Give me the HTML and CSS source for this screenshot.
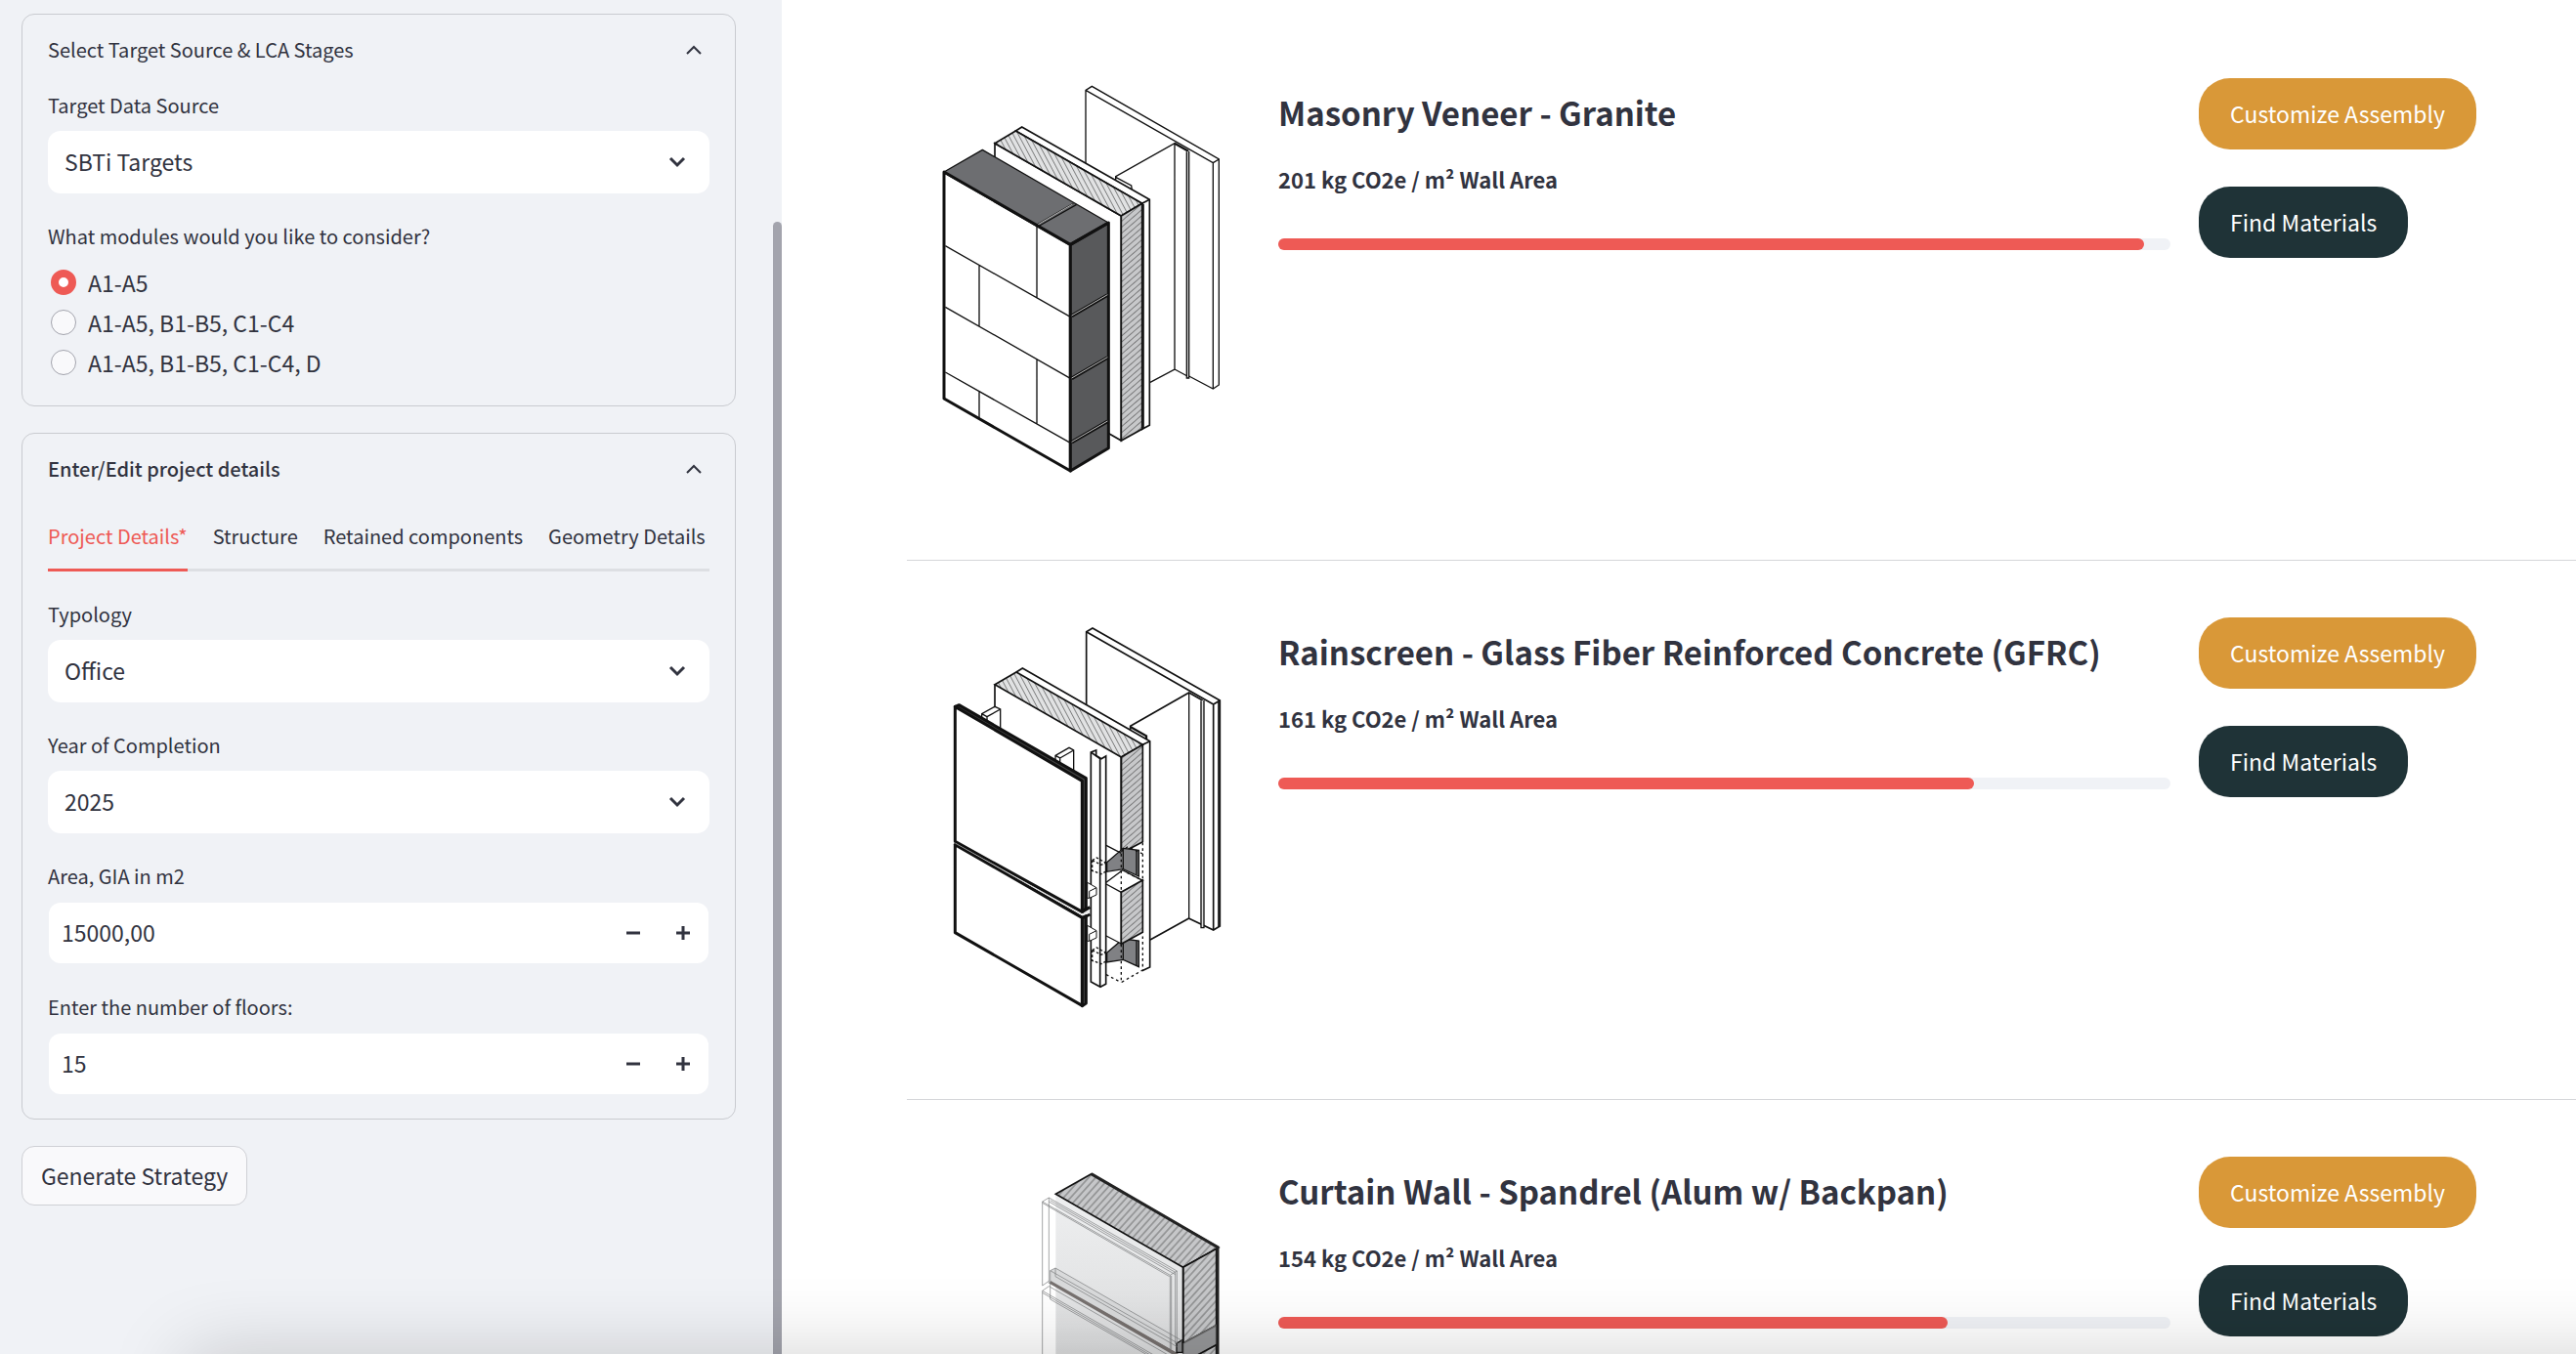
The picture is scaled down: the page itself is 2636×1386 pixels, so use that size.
FILE: index.html
```html
<!DOCTYPE html>
<html lang="en">
<head>
<meta charset="utf-8">
<title>Facade Assemblies</title>
<link rel="stylesheet" href="styles.css">
</head>
<body>
<div class="app">
  <aside class="sidebar">
    <details class="expander" open>
      <summary class="expander-head">
        <span>Select Target Source &amp; LCA Stages</span>
        <svg class="chevron" viewBox="0 0 20 20" aria-hidden="true"><path d="M3 14l7-7 7 7"/></svg>
      </summary>
      <div class="expander-body">
        <div class="field">
          <label class="label" for="source">Target Data Source</label>
          <div class="select">
            <select id="source"><option>SBTi Targets</option></select>
            <svg class="chevron bold" viewBox="0 0 20 20" aria-hidden="true"><path d="M3 6l7 7 7-7"/></svg>
          </div>
        </div>
        <fieldset class="field radios">
          <legend class="label">What modules would you like to consider?</legend>
          <label class="radio"><input type="radio" name="modules" checked>A1-A5</label>
          <label class="radio"><input type="radio" name="modules">A1-A5, B1-B5, C1-C4</label>
          <label class="radio"><input type="radio" name="modules">A1-A5, B1-B5, C1-C4, D</label>
        </fieldset>
      </div>
    </details>

    <details class="expander" open>
      <summary class="expander-head strong">
        <span>Enter/Edit project details</span>
        <svg class="chevron" viewBox="0 0 20 20" aria-hidden="true"><path d="M3 14l7-7 7 7"/></svg>
      </summary>
      <div class="expander-body">
        <div class="tabs" role="tablist">
          <button class="tab active" role="tab" aria-selected="true">Project Details*</button>
          <button class="tab" role="tab" aria-selected="false">Structure</button>
          <button class="tab" role="tab" aria-selected="false">Retained components</button>
          <button class="tab" role="tab" aria-selected="false">Geometry Details</button>
        </div>
        <div class="field">
          <label class="label" for="typology">Typology</label>
          <div class="select">
            <select id="typology"><option>Office</option></select>
            <svg class="chevron bold" viewBox="0 0 20 20" aria-hidden="true"><path d="M3 6l7 7 7-7"/></svg>
          </div>
        </div>
        <div class="field">
          <label class="label" for="year">Year of Completion</label>
          <div class="select">
            <select id="year"><option>2025</option></select>
            <svg class="chevron bold" viewBox="0 0 20 20" aria-hidden="true"><path d="M3 6l7 7 7-7"/></svg>
          </div>
        </div>
        <div class="field">
          <label class="label" for="area">Area, GIA in m2</label>
          <div class="number">
            <input id="area" type="text" inputmode="decimal" value="15000,00">
            <button class="step" aria-label="Decrease area"><svg viewBox="0 0 14 14"><path d="M0 7h14"/></svg></button>
            <button class="step" aria-label="Increase area"><svg viewBox="0 0 14 14"><path d="M0 7h14M7 0v14"/></svg></button>
          </div>
        </div>
        <div class="field">
          <label class="label" for="floors">Enter the number of floors:</label>
          <div class="number">
            <input id="floors" type="text" inputmode="numeric" value="15">
            <button class="step" aria-label="Decrease floors"><svg viewBox="0 0 14 14"><path d="M0 7h14"/></svg></button>
            <button class="step" aria-label="Increase floors"><svg viewBox="0 0 14 14"><path d="M0 7h14M7 0v14"/></svg></button>
          </div>
        </div>
      </div>
    </details>

    <button class="generate">Generate Strategy</button>
    <div class="scroll-thumb"></div>
  </aside>

  <main class="main">
    <article class="assembly">
      <svg class="drawing" viewBox="0 0 990 1290" role="img" aria-label="Masonry veneer assembly">
        <defs>
          <pattern id="hatch-top" width="14" height="14" patternUnits="userSpaceOnUse" patternTransform="rotate(-28)">
            <rect width="14" height="14" fill="#e1e2e3"/><path d="M7 0v14" stroke="#555" stroke-width="2"/>
          </pattern>
          <pattern id="hatch-side" width="14" height="14" patternUnits="userSpaceOnUse" patternTransform="rotate(49)">
            <rect width="14" height="14" fill="#c7c8ca"/><path d="M7 0v14" stroke="#555" stroke-width="2"/>
          </pattern>
        </defs>
        <g class="line">
          <path d="M513 292V67l19-12 390 224v693l-18 12-74-39M513 67l391 223v694M904 290l18-11"/>
          <path d="M605 342v-10l181-102v694l-75 40M786 924l39 21M605 334l48 26 2 14"/>
          <path class="heavy" d="M786 230l42 24"/>
          <path d="M823 256v695h7V254" fill="#d8d8d8"/>
        </g>
        <g class="line mid">
          <path class="paper" d="M234 230l388 223v690l-388-223z"/>
          <path class="paper" d="M298 192l19-12 392 223v693l-23 12V415z"/>
          <path d="M234 230l64-38 388 223-64 38z" fill="url(#hatch-top)"/>
          <path d="M622 453l64-38v693l-64 35z" fill="url(#hatch-side)"/>
          <path d="M686 415l23-12M690 417v690"/>
        </g>
        <g class="line thick">
          <path class="paper" d="M78 318l388 223v695L78 1014z"/>
          <path d="M78 318l118-68 387 224-117 67z" fill="#6d6e71" stroke-width="4"/>
          <path d="M466 541l117-67v692l-117 70z" fill="#58595b"/>
          <path d="M78 318l388 223 117-67"/>
        </g>
        <g class="line">
          <path d="M82 545l384 218M82 733l384 219M82 933l384 217M363 480v226M186 605v188M363 895v198M186 993v80"/>
          <path d="M363 480l112-65M371 483l114-65" />
        </g>
        <path d="M470 760l110-64M470 952l110-64M470 1148l110-64" stroke="#111" stroke-width="11"/>
        <path d="M470 759l110-64M470 951l110-64M470 1147l110-64M367 479l106-62" stroke="#bbb" stroke-width="3"/>
      </svg>
      <div class="info">
        <h3 class="title">Masonry Veneer - Granite</h3>
        <p class="score">201 kg CO2e / m² Wall Area</p>
        <div class="bar"><div class="fill" style="width:97%"></div></div>
      </div>
      <div class="actions">
        <button class="pill amber">Customize Assembly</button>
        <button class="pill dark">Find Materials</button>
      </div>
    </article>

    <article class="assembly">
      <svg class="drawing" viewBox="0 6 990 1290" role="img" aria-label="Rainscreen assembly">
        <g class="line mid">
          <path d="M515 303V80l19-11 391 222v693l-20 12-76-36"/>
          <path d="M515 80l390 223v693M905 303l20-12M921 293v693" />
          <path d="M650 382v-12l180-103 42 24M830 960l-119 66" />
        </g>
        <g class="line">
          <path d="M830 267v693M867 292v697h9V290" fill="#ddd"/>
          <path class="heavy" d="M650 372l49 28v14"/>
        </g>
        <g class="line mid">
          <path class="paper" d="M234 242l388 223v690" stroke="none"/>
          <path class="paper" d="M300 204l19-12 391 224v694l-24 11" />
          <path d="M234 242l66-38 388 223-66 38z" fill="url(#hatch-top)"/>
          <path d="M622 465l66-38v298l-66 35z" fill="url(#hatch-side)"/>
          <path d="M622 465v295M234 242v130M688 427l22-11"/>
        </g>
        <g class="line">
          <path class="paper" d="M194 348v-16l40-22 17 8v62M194 332l16 9v20M210 341l41-23"/>
          <path class="paper" d="M420 480v-20l42-24 14 8v70M420 460l14 8v22M434 468l42-24"/>
          <path d="M578 788l50-43 48 6v80l-48-22-50 8z" fill="#808184"/>
          <path d="M578 1066l50-43 48 6v80l-48-22-50 8z" fill="#808184"/>
          <path d="M628 745v64M628 1023v64M669 752v74M669 1030v74"/>
          <path class="paper" d="M576 850l50-38 62 32-66 36v158l-46-24"/>
          <path d="M576 736l46 24M576 855l46 25"/>
        </g>
        <g class="line mid">
          <path d="M622 880l66-37v160l-66 36z" fill="url(#hatch-side)"/>
        </g>
        <path class="line" stroke-dasharray="8 9" d="M622 762v110M688 728v112M622 1040v117l66-38v-112M576 1133l46 24M640 820l48 24M622 755l20-15 46 22"/>
        <g class="line mid">
          <path class="paper" d="M529 450l16-6v16l16 10 14-8v700l-17 9-29-16z"/>
          <path d="M529 450l28 20v700"/>
          <path class="paper" stroke-width="3" d="M518 850l28 16v22l-22 10h-6zM524 877l22-11M524 877v20M518 982l28 16v22l-22 10h-6zM524 1009l22-11M524 1009v20"/>
        </g>
        <path class="line" stroke-dasharray="8 6" d="M533 782l14-8 28 16M533 782v32l28 10 14-8M533 782l28 14 14-6M533 1058l14-8 28 16M533 1058v32l28 10 14-8M533 1058l28 14 14-6"/>
        <g class="line thick">
          <path d="M112 310l12-5 390 225v400l-12 10z" fill="#444"/>
          <path class="paper" d="M112 310l390 228v402L112 724z"/>
          <path d="M112 734l390 224 12-5v268l-12 8z" fill="#444"/>
          <path class="paper" d="M112 734l390 224v270L112 1004z"/>
          <path d="M502 940l24-14M502 960l24-12" />
        </g>
        <path d="M112 729l390 220 22-10" stroke="#ccc" stroke-width="2" fill="none"/>
      </svg>
      <div class="info">
        <h3 class="title">Rainscreen - Glass Fiber Reinforced Concrete (GFRC)</h3>
        <p class="score">161 kg CO2e / m² Wall Area</p>
        <div class="bar"><div class="fill" style="width:78%"></div></div>
      </div>
      <div class="actions">
        <button class="pill amber">Customize Assembly</button>
        <button class="pill dark">Find Materials</button>
      </div>
    </article>

    <article class="assembly">
      <svg class="drawing" viewBox="-300 -18 990 1290" role="img" aria-label="Curtain wall spandrel assembly">
        <defs>
          <pattern id="hatch-pan" width="16" height="16" patternUnits="userSpaceOnUse" patternTransform="rotate(42)">
            <rect width="16" height="16" fill="#c6c7c9"/><path d="M8 0v16" stroke="#444" stroke-width="2"/>
          </pattern>
          <linearGradient id="glass" x1="0" y1="0" x2="0" y2="1">
            <stop offset="0" stop-color="#eeeff0"/><stop offset=".5" stop-color="#dcddde"/><stop offset="1" stop-color="#c8c9ca"/>
          </linearGradient>
        </defs>
        <path d="M121 127l391 225v760L121 890z" fill="url(#glass)"/>
        <g class="line mid">
          <path d="M121 127l109-62 391 226-109 61z" fill="url(#hatch-pan)"/>
          <path d="M512 352l102-57v235l-102 55z" fill="url(#hatch-pan)"/>
          <path d="M512 585l102-55v60l-102 55z" fill="#97989a" stroke="#666"/>
          <path d="M512 645l102-55v470l-102 55z" fill="url(#hatch-pan)"/>
          <path d="M512 352v233"/>
        </g>
        <path d="M230 65l388 225v765" fill="none" stroke="#222" stroke-width="9"/>
        <path d="M104 396l390 225" stroke="#77716f" stroke-width="12"/>
        <path d="M104 362l16-8 390 224-16 36-390-222z" fill="#d9dadb"/>
        <path d="M492 585l18-10v38h-18z" fill="#8b8c8e" stroke="#111" stroke-width="4"/>
        <g fill="none" stroke="#77787a" stroke-width="2">
          <path d="M80 408V150l20-12 393 225v222M80 150l392 226v228M80 154l390 226M100 138v264M104 146l384 221v220M100 150l388 224M472 376l21-13M476 378v226"/>
          <path d="M104 362l16-8 390 224M104 362l390 222M104 362v88M120 354v26l374 216"/>
          <path d="M80 408l20-14M80 1150V424l20-14 392 226M80 424l392 226M80 430l392 226M104 450l380 218"/>
        </g>
      </svg>
      <div class="info">
        <h3 class="title">Curtain Wall - Spandrel (Alum w/ Backpan)</h3>
        <p class="score">154 kg CO2e / m² Wall Area</p>
        <div class="bar"><div class="fill" style="width:75%"></div></div>
      </div>
      <div class="actions">
        <button class="pill amber">Customize Assembly</button>
        <button class="pill dark">Find Materials</button>
      </div>
    </article>
  </main>
  <div class="edge-shadow"></div>
</div>
</body>
</html>
```
FILE: styles.css
```css
* { box-sizing: border-box; }
body {
  margin: 0;
  color: #31333f;
  background: #fff;
  font-family: "Noto Sans CJK SC", "Noto Sans", sans-serif;
  font-size: 23px;
  line-height: 38px;
}
button, input, select { font: inherit; color: inherit; margin: 0; }
button { cursor: pointer; }
h3, p { margin: 0; }

.app { position: relative; display: flex; height: 100vh; overflow: hidden; }

/* Sidebar */
.sidebar {
  position: relative;
  flex: 0 0 800px;
  display: flex;
  flex-direction: column;
  align-items: stretch;
  gap: 27px;
  padding: 14px 47px 40px 22px;
  background: #f0f2f6;
  overflow: hidden;
}
.scroll-thumb {
  position: absolute;
  top: 227px;
  right: 0;
  bottom: -10px;
  width: 9px;
  border-radius: 5px;
  background: #a3a4ad;
}
.expander { border: 1px solid #c9cbd0; border-radius: 13px; flex: none; }
.expander-head {
  display: flex;
  align-items: center;
  justify-content: space-between;
  height: 74px;
  padding: 0 32px 2px 26px;
  font-size: 20px;
  list-style: none;
  cursor: pointer;
}
.strong { font-weight: 500; }
.expander-body { display: flex; flex-direction: column; gap: 25px; padding: 0 26px 24px; }
.chevron { width: 20px; height: 20px; fill: none; stroke: #31333f; stroke-width: 2; }
.chevron.bold { stroke-width: 3; }

.field { display: flex; flex-direction: column; gap: 7px; }
.label { font-size: 20px; padding: 0; }
.select { display: grid; align-items: center; height: 64px; }
.select select, .select .chevron { grid-area: 1 / 1; }
.select select {
  appearance: none;
  width: 100%;
  height: 100%;
  padding: 0 60px 2px 17px;
  border: 0;
  border-radius: 13px;
  background: #fff;
}
.select .chevron { justify-self: end; margin-right: 23px; pointer-events: none; }

.radios { display: block; border: 0; margin: 0; padding: 0; min-width: 0; }
.radios .label { margin-bottom: 7px; }
.radio { display: flex; align-items: center; gap: 12px; height: 41px; padding-left: 3px; }
.radio input {
  appearance: none;
  width: 26px;
  height: 26px;
  margin: 0;
  border: 1px solid #a3a4ad;
  border-radius: 50%;
  background: #f9f9fb;
}
.radio input:checked { border: 8px solid #ee5a55; background: #fff; }

.tabs { display: flex; gap: 26px; margin-top: 12px; box-shadow: inset 0 -3px #dddfe3; }
.tab {
  padding: 0 0 14px;
  border: 0;
  border-bottom: 3px solid transparent;
  background: none;
  font-size: 20px;
  white-space: nowrap;
}
.tab.active { color: #ee5a55; border-color: #ee5a55; }

.number {
  display: flex;
  height: 64px;
  padding-right: 1px;
  border: 1px solid transparent;
  border-radius: 13px;
  background: #fff padding-box;
}
.number input {
  flex: 1;
  min-width: 0;
  padding: 0 13px 2px;
  border: 0;
  background: none;
}
.step {
  display: grid;
  place-items: center;
  width: 51px;
  padding: 0;
  border: 0;
  background: none;
}
.step svg { width: 14px; height: 14px; fill: none; stroke: #31333f; stroke-width: 3; }

.generate {
  align-self: flex-start;
  height: 61px;
  padding: 0 19px 2px;
  border: 1px solid #cfd0d5;
  border-radius: 13px;
  background: #f9f9fb;
}

/* Assembly list */
.main { flex: 1; min-width: 0; padding: 22px 0 0 128px; overflow: hidden; }
.assembly {
  display: grid;
  grid-template-columns: 351px 1fr 386px;
  column-gap: 29px;
  padding: 48px 0 73px;
  border-bottom: 1px solid #d5d6d9;
}
.drawing { display: block; width: 330px; height: 430px; margin-left: 12px; }
.line { fill: none; stroke: #111; stroke-width: 4; }
.mid { stroke-width: 5; }
.thick { stroke-width: 9; stroke-linejoin: round; }
.heavy { stroke-width: 7; }
.paper { fill: #fff; }

.info { display: flex; flex-direction: column; padding-top: 18px; }
.title { font-size: 33px; font-weight: 600; line-height: 54px; }
.score { margin-top: 22px; font-size: 22px; font-weight: 600; }
.bar { height: 12px; margin-top: 42px; border-radius: 6px; background: #f0f2f6; }
.fill { height: 100%; border-radius: 6px; background: #ee5a55; }

.actions { display: flex; flex-direction: column; align-items: flex-start; gap: 38px; padding-top: 10px; }
.pill { height: 73px; padding: 0 32px 2px; border: 0; border-radius: 32px; color: #fff; white-space: nowrap; }
.amber { background: #d99838; }
.dark { background: #1f3337; }

/* Shade cast along the bottom edge of the window */
.edge-shadow {
  position: absolute;
  top: 100%;
  left: 190px;
  right: -100px;
  height: 100px;
  box-shadow: 0 0 80px rgba(0, 0, 0, .18);
  pointer-events: none;
}
```
